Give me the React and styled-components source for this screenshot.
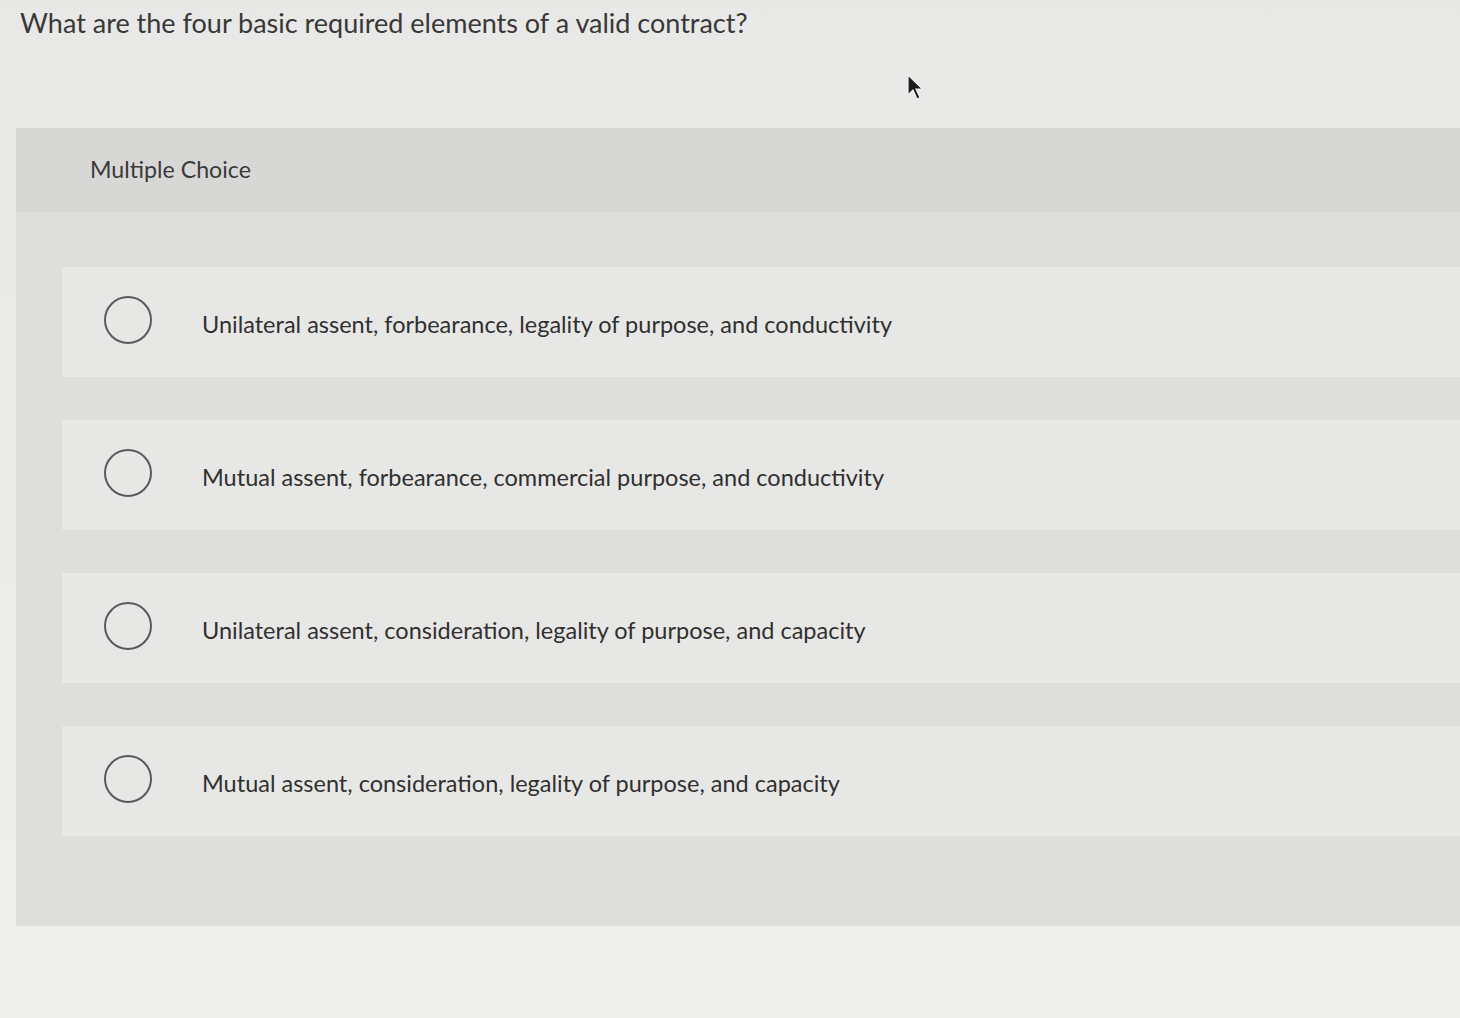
import React from 'react'
import styled, { createGlobalStyle } from 'styled-components'

const GlobalStyle = createGlobalStyle`
  html, body {
    margin: 0;
    padding: 0;
    background: #e9e9e7;
    overflow: hidden;
  }
  body {
    font-family: Lato, "Open Sans", "Liberation Sans", sans-serif;
    color: #363636;
  }
`

const Page = styled.div`
  position: relative;
  width: 1460px;
  height: 1018px;
  background: linear-gradient(180deg, #e8e8e6 0%, #ececea 60%, #efefed 100%);
`

const Question = styled.h1`
  margin: 0;
  padding: 6px 0 0 20px;
  height: 128px;
  box-sizing: border-box;
  font-size: 27px;
  font-weight: 400;
  color: #383838;
`

const Panel = styled.section`
  margin-left: 16px;
  background: #dedfdd;
  padding-bottom: 90px;
`

const PanelHeader = styled.div`
  height: 84px;
  display: flex;
  align-items: center;
  padding-left: 74px;
  padding-bottom: 2px;
  box-sizing: border-box;
  background: #d7d8d6;
  font-size: 23.2px;
  color: #3a3a3a;
`

const Options = styled.div`
  display: flex;
  flex-direction: column;
  gap: 43px;
  padding: 55px 0 0 46px;
`

const OptionCard = styled.label`
  height: 110px;
  display: flex;
  align-items: center;
  gap: 50px;
  padding-left: 42px;
  background: #e7e7e5;
  cursor: pointer;
`

const Radio = styled.span`
  width: 44px;
  height: 44px;
  border-radius: 50%;
  border: 2px solid #5a5a5a;
  flex: none;
  margin-top: -4px;
`

const OptionText = styled.span`
  font-size: 23.5px;
  color: #303030;
  padding-top: 3px;
`

const Cursor = styled.svg`
  position: absolute;
  left: 906px;
  top: 74px;
`

const options = [
  'Unilateral assent, forbearance, legality of purpose, and conductivity',
  'Mutual assent, forbearance, commercial purpose, and conductivity',
  'Unilateral assent, consideration, legality of purpose, and capacity',
  'Mutual assent, consideration, legality of purpose, and capacity',
]

export default function App() {
  return (
    <Page>
      <GlobalStyle />
      <Question>What are the four basic required elements of a valid contract?</Question>
      <Panel>
        <PanelHeader>Multiple Choice</PanelHeader>
        <Options>
          {options.map((text) => (
            <OptionCard key={text}>
              <Radio />
              <OptionText>{text}</OptionText>
            </OptionCard>
          ))}
        </Options>
      </Panel>
      <Cursor width="18" height="28" viewBox="0 0 18 28">
        <path d="M2 1 L2 21 L7 16 L11 25 L14 23.5 L10 15 L16.5 15 Z" fill="#1d1d1d" stroke="#f2f2f2" strokeWidth="1.2" />
      </Cursor>
    </Page>
  )
}
